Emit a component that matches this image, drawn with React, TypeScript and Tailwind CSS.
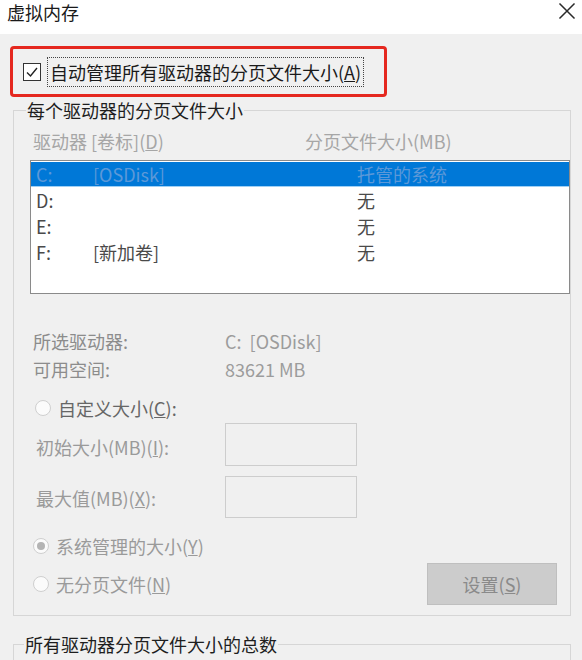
import React from 'react';

const font = { fontFamily: '"Noto Sans CJK SC", "Noto Sans", sans-serif' };

const Radio = ({ checked = false }: { checked?: boolean }) => (
  <span className="flex size-[16px] shrink-0 items-center justify-center rounded-full border border-[#cfcfcf] bg-[#fbfbfb]">
    {checked && <span className="size-[8px] rounded-full bg-[#b4b4b4]" />}
  </span>
);

const drives = [
  { letter: 'D:', label: '', size: '无' },
  { letter: 'E:', label: '', size: '无' },
  { letter: 'F:', label: '[新加卷]', size: '无' },
];

const App = () => {
  return (
    <div className="h-[660px] w-[582px] overflow-hidden bg-[#f0f0f0] text-[18px]" style={font}>
      {/* title bar */}
      <div className="flex h-[34px] items-start justify-between bg-white pl-[7px] pr-[6px]">
        <span className="leading-[24px] text-[#1a1a1a]">虚拟内存</span>
        <span className="mt-[2px] h-[18px] w-[18px] shrink-0 text-[16px] leading-[18px] text-[#2a2a2a]">
          <svg viewBox="0 0 18 18" width="18" height="18" className="block">
            <path d="M2 2L16 16M16 2L2 16" stroke="#2a2a2a" strokeWidth="1.5" strokeLinecap="square" />
          </svg>
        </span>
      </div>

      {/* auto manage checkbox, highlighted */}
      <div className="ml-[10px] mt-[12px] flex h-[51px] w-[377px] items-center rounded-[4px] border-[3px] border-[#e5281f] pl-[10px]">
        <span className="flex size-[18px] items-center justify-center border border-[#333] bg-white">
          <svg width="14" height="14" viewBox="0 0 14 14">
            <path d="M2 7.5 L5.5 11 L12 3" stroke="#222" strokeWidth="1.4" fill="none" />
          </svg>
        </span>
        <span className="ml-[6px] border border-dotted border-[#444] px-[2px] py-[2px] leading-[24px] text-[#1a1a1a]">
          自动管理所有驱动器的分页文件大小(<u>A</u>)
        </span>
      </div>

      {/* per drive group */}
      <fieldset className="ml-[13px] mt-[2px] w-[558px] border border-[#d6d6d6] pb-[10px]">
        <legend className="ml-[12px] px-[1px] leading-[22px] text-[#1e1e1e]">每个驱动器的分页文件大小</legend>

        <div className="mt-[9px] flex pl-[19px] leading-[22px] text-[#a6a6a6]">
          <span className="w-[272px]">驱动器 [卷标](<u>D</u>)</span>
          <span>分页文件大小(MB)</span>
        </div>

        <div className="ml-[16px] mt-[8px] h-[134px] w-[540px] border border-[#8a8a8a] bg-white pt-[1px]">
          <div className="flex h-[25px] items-center border-b border-[#9fd0f5] bg-[#0078d7] pl-[5px] text-[#5c98d8]">
            <span className="w-[57px]">C:</span>
            <span className="w-[264px]">[OSDisk]</span>
            <span>托管的系统</span>
          </div>
          {drives.map((d) => (
            <div key={d.letter} className="flex h-[26px] items-center pl-[5px] text-[#4a4a4a]">
              <span className="w-[57px]">{d.letter}</span>
              <span className="w-[264px]">{d.label}</span>
              <span>{d.size}</span>
            </div>
          ))}
        </div>

        <div className="mt-[33px] pl-[19px] leading-[22px]">
          <div className="flex h-[28px] items-center">
            <span className="w-[192px] text-[#8c8c8c]">所选驱动器:</span>
            <span className="text-[#9c9c9c]">C:&nbsp; [OSDisk]</span>
          </div>
          <div className="flex h-[28px] items-center">
            <span className="w-[192px] text-[#8c8c8c]">可用空间:</span>
            <span className="text-[#9c9c9c]">83621 MB</span>
          </div>
        </div>

        <div className="mt-[14px] flex h-[22px] items-center gap-[7px] pl-[21px] text-[#666]">
          <Radio />
          <span>自定义大小(<u>C</u>):</span>
        </div>

        <div className="mt-[4px] flex items-center pl-[22px] text-[#9a9a9a]">
          <span className="w-[189px] pt-[6px]">初始大小(MB)(<u>I</u>):</span>
          <div className="h-[43px] w-[132px] border border-[#cdcdcd] bg-[#f0f0f0]" />
        </div>
        <div className="mt-[10px] flex items-center pl-[22px] text-[#9a9a9a]">
          <span className="w-[189px] pt-[2px]">最大值(MB)(<u>X</u>):</span>
          <div className="h-[42px] w-[132px] border border-[#cdcdcd] bg-[#f0f0f0]" />
        </div>

        <div className="mt-[17px] flex h-[22px] items-center gap-[7px] pl-[19px] text-[#9a9a9a]">
          <Radio checked />
          <span>系统管理的大小(<u>Y</u>)</span>
        </div>

        <div className="mt-[6px] flex items-center pl-[19px] pr-[13px] text-[#9a9a9a]">
          <div className="flex items-center gap-[7px]">
            <Radio />
            <span>无分页文件(<u>N</u>)</span>
          </div>
          <div className="ml-auto flex h-[42px] w-[130px] items-center justify-center border border-[#bfbfbf] bg-[#cccccc] text-[#8a8a8a]">
            设置(<u>S</u>)
          </div>
        </div>
      </fieldset>

      {/* total group */}
      <fieldset className="ml-[13px] mt-[17px] h-[60px] w-[558px] border border-[#d6d6d6]">
        <legend className="ml-[10px] px-[1px] leading-[22px] text-[#1e1e1e]">所有驱动器分页文件大小的总数</legend>
      </fieldset>
    </div>
  );
};

export default App;
